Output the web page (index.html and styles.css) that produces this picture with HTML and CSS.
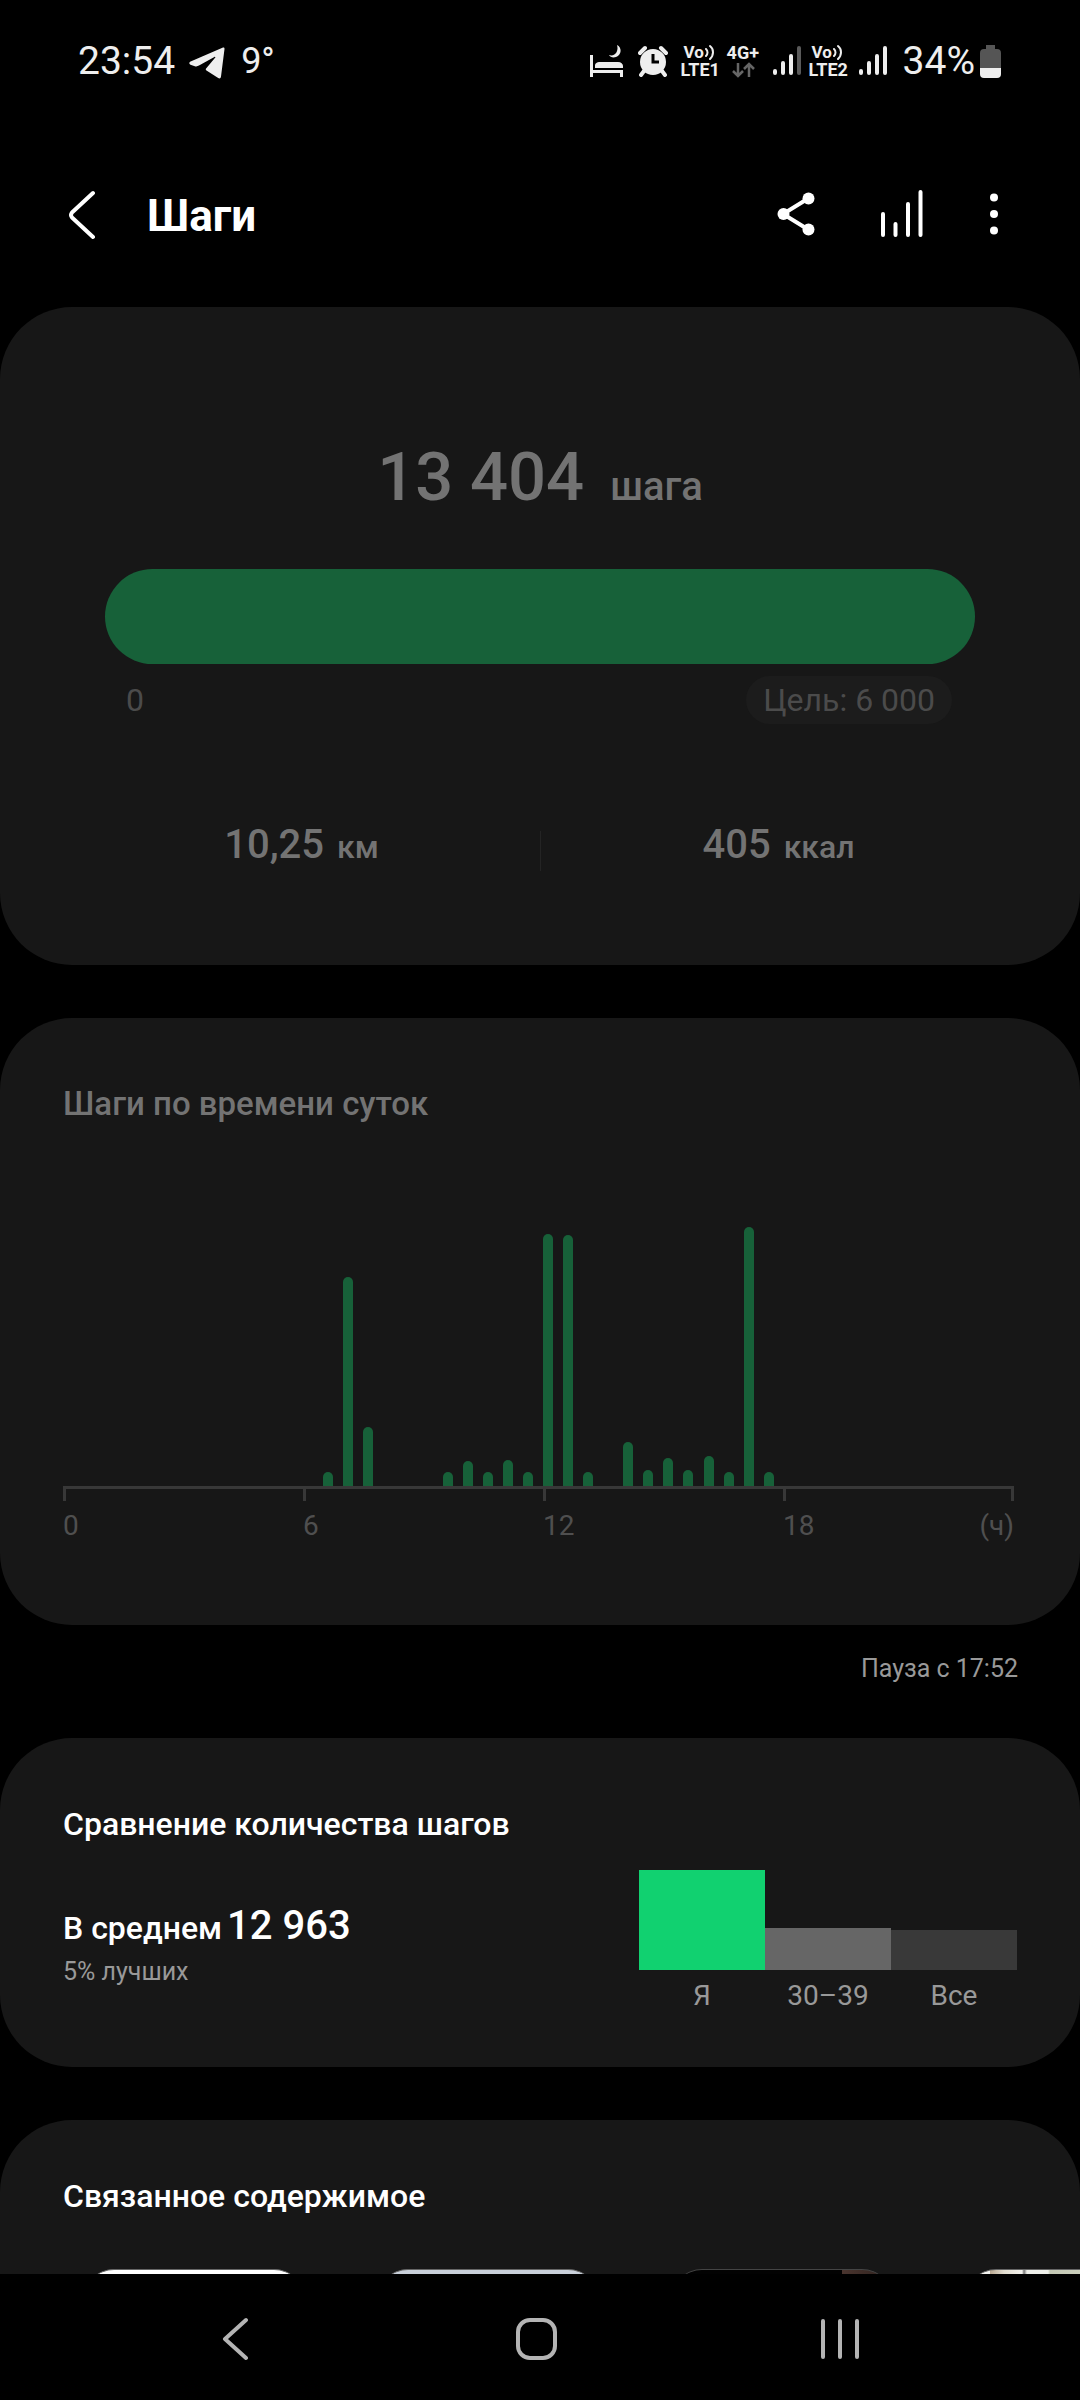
FILE: index.html
```html
<!DOCTYPE html>
<html lang="ru">
<head>
<meta charset="utf-8">
<meta name="viewport" content="width=device-width, initial-scale=1">
<title>Шаги</title>
<link rel="stylesheet" href="styles.css">
</head>
<body>
<div class="status">
  <div class="status-group">
    <span class="status-time">23:54</span>
    <svg class="telegram" width="36" height="32" viewBox="0 0 36 32" fill="#eee"><path d="M34 0.5C35 0.2 35.6 0.9 35.5 1.9L32 29.5C31.8 31.3 30.6 31.9 29.2 31L17.5 23.6C16.5 22.9 16.6 22 17.3 21.2L26.3 10.6C26.7 10 26 9.5 25.4 9.9L10 18.6C8.6 19.4 7.3 19.6 5.8 19.2L1.5 17.8C-0.2 17.2 0 15.4 1.6 14.6Z"/></svg>
    <span class="status-temp">9°</span>
  </div>
  <div class="status-group">
    <svg class="bed" width="33" height="34" viewBox="0 0 33 34" fill="#eee"><path d="M0 11h3v15h30v7h-3v-4H3v4H0zM5 24v-2c0-3 2-4 5-4h18c3 0 5 2 5 4v2z"/><path d="M27 1c5 2 5 10-1 12-3 1-6 0-7-2 6 2 10-4 8-10z"/></svg>
    <svg class="alarm" width="30" height="32" viewBox="0 0 30 32" fill="#eee"><path fill-rule="evenodd" d="M15 4a13 13 0 1 0 0 26a13 13 0 1 0 0-26zm-1.500 5v9.500h7.500v-3h-4.500V9z"/><path d="M2 8l5-5M28 8l-5-5M6 26l-3 4M24 26l3 4" stroke="#eee" stroke-width="4" stroke-linecap="round"/></svg>
    <span class="volte volte-first"><span class="volte-top">Vo<svg width="11" height="16" viewBox="0 0 11 16" fill="none" stroke="#eee" stroke-width="2" stroke-linecap="round"><path d="M2 5c2 2 2 5 0 7M6 2c4 3 4 9 0 13"/></svg></span><span class="volte-name">LTE1</span></span>
    <span class="data"><span class="data-name">4G+</span><svg width="23" height="16" viewBox="0 0 23 16" fill="none" stroke="#666" stroke-width="2.500"><path d="M6 1v13M1 9l5 5 5-5M17 15V2M12 7l5-5 5 5"/></svg></span>
    <svg class="signal" width="28" height="30" viewBox="0 0 28 30" fill="none" stroke="#eee" stroke-width="4" stroke-linecap="round"><path d="M2 25v2M10 17v10M18 10v17"/><path d="M26 2v25" stroke="#5a5a5a"/></svg>
    <span class="volte"><span class="volte-top">Vo<svg width="11" height="16" viewBox="0 0 11 16" fill="none" stroke="#eee" stroke-width="2" stroke-linecap="round"><path d="M2 5c2 2 2 5 0 7M6 2c4 3 4 9 0 13"/></svg></span><span class="volte-name">LTE2</span></span>
    <svg class="signal" width="28" height="30" viewBox="0 0 28 30" fill="none" stroke="#eee" stroke-width="4" stroke-linecap="round"><path d="M2 25v2M10 17v10M18 10v17M26 2v25"/></svg>
    <span class="battery-level">34%</span>
    <svg class="battery" width="21" height="33" viewBox="0 0 21 33"><path d="M6 0h9v4h2q4 0 4 4v15H0V8q0-4 4-4h2z" fill="#555"/><path d="M0 23h21v6q0 4-4 4H4q-4 0-4-4z" fill="#eee"/></svg>
  </div>
</div>

<header class="appbar">
  <button class="icon-button" aria-label="Назад"><svg width="28" height="50" viewBox="0 0 28 50" fill="none" stroke="#fff" stroke-width="4" stroke-linecap="round" stroke-linejoin="round"><path d="M25 3L4 22.500q-2 2.500 0 5L25 47"/></svg></button>
  <h1 class="appbar-title">Шаги</h1>
  <div class="appbar-actions">
    <button class="icon-button" aria-label="Поделиться"><svg width="38" height="44" viewBox="0 0 38 44" fill="#fff"><path d="M32 6L6 22l26 16" fill="none" stroke="#fff" stroke-width="4"/><circle cx="31.500" cy="6.500" r="6"/><circle cx="6.500" cy="22" r="6"/><circle cx="31.500" cy="37.500" r="6"/></svg></button>
    <button class="icon-button" aria-label="Статистика"><svg width="42" height="48" viewBox="0 0 42 48" fill="none" stroke="#fff" stroke-width="4" stroke-linecap="round"><path d="M2 24v21M14.500 34v11M27 14v31M39.500 2v43"/></svg></button>
    <button class="icon-button" aria-label="Ещё"><svg width="10" height="42" viewBox="0 0 10 42" fill="#fff"><circle cx="5" cy="4.500" r="4"/><circle cx="5" cy="21" r="4"/><circle cx="5" cy="37.500" r="4"/></svg></button>
  </div>
</header>

<main class="content">
  <section class="card summary">
    <p class="steps"><span class="steps-value">13 404</span><span class="steps-unit">шага</span></p>
    <div class="progress" role="progressbar" aria-label="Шаги" aria-valuemin="0" aria-valuemax="6000" aria-valuenow="6000"></div>
    <div class="scale"><span>0</span><span class="goal">Цель: 6 000</span></div>
    <div class="stats">
      <p class="stat">10,25<span class="stat-unit">км</span></p>
      <p class="stat">405<span class="stat-unit">ккал</span></p>
    </div>
  </section>

  <section class="card hourly">
    <h2 class="card-title">Шаги по времени суток</h2>
    <div class="plot">
      <i></i><i></i><i></i><i></i><i></i><i></i><i></i><i></i><i></i><i></i><i></i><i></i><i></i>
      <i style="height:14px"></i><i style="height:209px"></i><i style="height:59px"></i>
      <i></i><i></i><i></i>
      <i style="height:14px"></i><i style="height:25px"></i><i style="height:14px"></i><i style="height:26px"></i><i style="height:14px"></i><i style="height:252px"></i><i style="height:251px"></i><i style="height:14px"></i>
      <i></i>
      <i style="height:44px"></i><i style="height:16px"></i><i style="height:28px"></i><i style="height:16px"></i><i style="height:30px"></i><i style="height:14px"></i><i style="height:259px"></i><i style="height:14px"></i>
      <i></i><i></i><i></i><i></i><i></i><i></i><i></i><i></i><i></i><i></i><i></i><i></i>
    </div>
    <div class="axis"><span></span><span></span><span></span><span></span></div>
    <div class="axis-labels"><span>0</span><span>6</span><span>12</span><span class="axis-last"><span>18</span><span>(ч)</span></span></div>
  </section>
  <p class="note">Пауза с 17:52</p>

  <section class="card compare">
    <h2 class="card-title">Сравнение количества шагов</h2>
    <div class="compare-row">
      <div class="average">
        <p class="average-line"><span>В среднем</span><span class="average-value">12 963</span></p>
        <p class="average-rank">5% лучших</p>
      </div>
      <div class="groups">
        <div class="group"><div class="group-bar group-me" style="height:100px"></div>Я</div>
        <div class="group"><div class="group-bar group-age" style="height:42px"></div>30–39</div>
        <div class="group"><div class="group-bar group-all" style="height:40px"></div>Все</div>
      </div>
    </div>
  </section>

  <section class="card related">
    <h2 class="card-title">Связанное содержимое</h2>
    <div class="thumbs">
      <div class="thumb thumb-white"></div>
      <div class="thumb thumb-blue"></div>
      <div class="thumb thumb-dark"></div>
      <div class="thumb thumb-photo"></div>
    </div>
  </section>
</main>

<nav class="navbar">
  <button class="nav-button" aria-label="Назад"><svg width="26" height="44" viewBox="0 0 26 44" fill="none" stroke="#b4b4b4" stroke-width="4" stroke-linecap="round" stroke-linejoin="round"><path d="M24 3L3 22l21 19"/></svg></button>
  <button class="nav-button" aria-label="Главный экран"><svg width="42" height="44" viewBox="0 0 42 44" fill="none" stroke="#b4b4b4" stroke-width="4"><rect x="2" y="3" width="37" height="38" rx="12"/></svg></button>
  <button class="nav-button" aria-label="Недавние"><svg width="40" height="44" viewBox="0 0 40 44" fill="none" stroke="#b4b4b4" stroke-width="4" stroke-linecap="round"><path d="M3 4v36M20 4v36M37 4v36"/></svg></button>
</nav>
</body>
</html>
```
FILE: styles.css
```css
* {
  box-sizing: border-box;
}

body {
  margin: 0;
  height: 100vh;
  display: flex;
  flex-direction: column;
  overflow: hidden;
  background: #000;
  color: #fff;
  font-family: Roboto, "Liberation Sans", sans-serif;
}

p, h1, h2 {
  margin: 0;
}

svg {
  display: block;
  flex: none;
}

button {
  display: flex;
  align-items: center;
  justify-content: center;
  padding: 0;
  border: 0;
  background: none;
}

/* Status bar */
.status {
  flex: none;
  display: flex;
  justify-content: space-between;
  height: 120px;
  padding: 2px 79px 0 78px;
  color: #eee;
  font-size: 39px;
  line-height: 48px;
}

.status-group {
  display: flex;
  align-items: center;
}

.telegram {
  margin: 4px 16px 0 14px;
}

.status-temp {
  font-size: 36px;
}

.alarm {
  margin-left: 15px;
}

.volte {
  width: 40px;
  margin-left: 8px;
  font-size: 18px;
  font-weight: 700;
  line-height: 17px;
}

.volte-first {
  margin-left: 13px;
}

.volte-top {
  display: flex;
  padding-left: 3px;
  font-size: 17px;
}

.volte-name {
  display: block;
}

.data {
  width: 34px;
  margin: 0 12px 0 6px;
  font-size: 18px;
  font-weight: 700;
  line-height: 18px;
}

.data svg {
  margin-left: 5px;
}

.data-name {
  display: block;
}

.volte + .signal {
  margin-left: 10px;
}

.battery-level {
  margin-left: 16px;
}

.battery {
  margin-left: 5px;
}

/* App bar */
.appbar {
  flex: none;
  display: flex;
  align-items: center;
  height: 187px;
  padding: 2px 81px 0 68px;
}

.appbar-title {
  flex: 1;
  margin-left: 51px;
  padding-top: 2px;
  font-size: 44px;
  font-weight: 700;
  line-height: 52px;
}

.appbar-actions {
  display: flex;
  align-items: center;
  gap: 66px;
  padding-bottom: 2px;
}

/* Cards */
.content {
  flex: 1;
  min-height: 0;
  overflow: hidden;
}

.card {
  padding: 66px 63px 0;
  border-radius: 72px;
  background: #171717;
}

.card + .card,
.note + .card {
  margin-top: 53px;
}

.card-title {
  font-size: 32px;
  font-weight: 500;
  line-height: 40px;
}

.summary {
  padding: 130px 63px 94px;
  color: #737373;
}

.steps {
  display: flex;
  align-items: baseline;
  justify-content: center;
  gap: 26px;
  font-weight: 500;
  line-height: 80px;
}

.steps-value {
  font-size: 67px;
}

.steps-unit {
  font-size: 40px;
  line-height: 40px;
}

.progress {
  height: 95px;
  margin: 52px 42px 12px;
  border-radius: 48px;
  background: #176139;
}

.scale {
  display: flex;
  justify-content: space-between;
  padding: 0 65px 0 63px;
  color: #4b4b4b;
  font-size: 32px;
  line-height: 48px;
}

.goal {
  padding: 0 17px;
  border-radius: 24px;
  background: #1c1c1c;
}

.stats {
  display: grid;
  grid-template-columns: 1fr 1fr;
  margin-top: 97px;
  height: 50px;
  background: linear-gradient(#242424, #242424) 50% 100% / 1px 40px no-repeat;
}

.stat {
  text-align: center;
  font-size: 40px;
  font-weight: 500;
  line-height: 48px;
}

.stat-unit {
  margin-left: 13px;
  font-size: 32px;
}

/* Steps by time of day */
.hourly {
  padding-bottom: 81px;
}

.hourly .card-title {
  color: #737373;
  font-size: 33px;
}

.plot {
  display: flex;
  align-items: flex-end;
  justify-content: space-between;
  height: 260px;
  margin: 102px 3px 0 0;
}

.plot i {
  width: 10px;
  border-radius: 5px 5px 0 0;
  background: #176139;
}

.axis,
.axis-labels {
  display: grid;
  grid-template-columns: 240fr 240fr 240fr 231fr;
  margin-right: 3px;
}

.axis {
  height: 15px;
  border-top: 3px solid #383838;
}

.axis span {
  border-left: 3px solid #383838;
}

.axis span:last-child {
  border-right: 3px solid #383838;
}

.axis-labels {
  margin-top: 7px;
  color: #4f4f4f;
  font-size: 28px;
  line-height: 36px;
}

.axis-last {
  display: flex;
  justify-content: space-between;
}

.note {
  padding: 28px 62px 0;
  color: #999;
  text-align: right;
  font-size: 25px;
  line-height: 32px;
}

/* Comparison */
.compare {
  padding-bottom: 53px;
}

.compare-row {
  display: flex;
  justify-content: space-between;
  margin-top: 26px;
}

.average {
  padding-top: 32px;
}

.average-line {
  display: flex;
  align-items: baseline;
  gap: 5px;
  font-size: 32px;
  font-weight: 500;
  line-height: 40px;
}

.average-value {
  font-size: 40px;
  line-height: 48px;
}

.average-rank {
  margin-top: 6px;
  color: #999;
  font-size: 25px;
  line-height: 32px;
}

.groups {
  display: flex;
  align-items: flex-end;
}

.group {
  width: 126px;
  color: #999;
  text-align: center;
  font-size: 28px;
  line-height: 36px;
}

.group-bar {
  margin-bottom: 8px;
}

.group-me {
  background: #11d170;
}

.group-age {
  background: #666;
}

.group-all {
  background: #393939;
}

/* Related content */
.related {
  padding-top: 56px;
}

.thumbs {
  display: flex;
  gap: 74px;
  margin: 53px -63px 0 21px;
  overflow: hidden;
}

.thumb {
  flex: none;
  width: 220px;
  height: 220px;
  border-top: 1px solid #666;
  border-radius: 30px;
}

.thumb-white {
  background: #fff;
}

.thumb-blue {
  background: #c9d0da;
}

.thumb-dark {
  border-top-color: #444;
  background: linear-gradient(90deg, #020202 170px, #4a352f 170px, #2c201c);
}

.thumb-photo {
  background: linear-gradient(90deg, #f4f4f0 24px, #b9a891 24px, #e2ddd0 38px, #f3f3ee 56px, #777 58px, #eef0ea 61px, #eef0ea 82px, #c3c8b4 84px, #e6e8dc);
}

/* System navigation */
.navbar {
  flex: none;
  display: grid;
  grid-template-columns: repeat(3, 1fr);
  height: 126px;
  padding: 4px 89px 0 84px;
  background: #000;
}
```
